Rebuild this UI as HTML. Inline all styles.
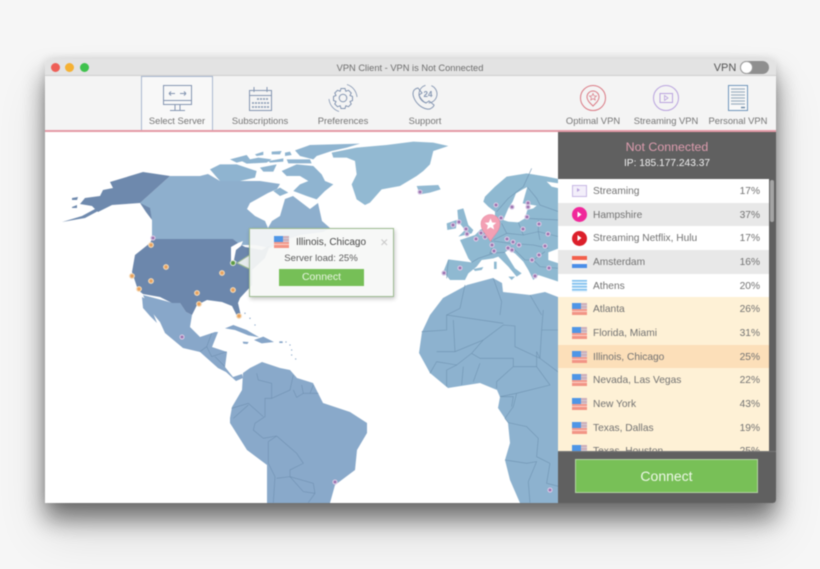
<!DOCTYPE html>
<html><head><meta charset="utf-8"><title>VPN Client</title>
<style>
html,body{margin:0;padding:0;background:#f6f6f6}
#p{position:relative;width:820px;height:569px;overflow:hidden;font-family:"Liberation Sans",sans-serif;filter:blur(.4px)}
#w{position:absolute;left:45px;top:59px;width:731px;height:444px;border-radius:5px 5px 3px 3px;box-shadow:0 16px 24px rgba(0,0,0,.5),0 30px 50px rgba(0,0,0,.12),0 0 10px rgba(0,0,0,.12)}
#t{position:absolute;left:45px;top:59px;width:731px;height:17px;background:#e3e3e3;border-radius:5px 5px 0 0;border-bottom:1px solid #cfcfcf;box-sizing:border-box}
.d{position:absolute;width:9px;height:9px;border-radius:50%;top:63px}
#b{position:absolute;left:45px;top:76px;width:731px;height:54px;background:#f4f4f4}
#l{position:absolute;left:45px;top:130px;width:731px;height:1.5px;background:#e49aa6}
#m{position:absolute;left:45px;top:131px;width:513px;height:372px;background:#fff}
svg{position:absolute;left:0;top:0}
.x{position:absolute;font-size:9.4px;color:#757575;line-height:12px;white-space:nowrap;text-align:center}
#s{position:absolute;left:558px;top:131px;width:218px;height:372px;background:#606060;border-radius:0 0 3px 0}
.r{position:absolute;left:558px;width:211px;height:23.7px;line-height:25.2px;font-size:10.2px;color:#727272;background:#fff}
.r span{position:absolute;left:35px}
.r b{position:absolute;right:9px;font-weight:normal}
.r i{position:absolute;left:14px;top:6px;width:15px;height:12px}
.o{background:#fef1d6}.g{background:#e8e8e8}
.us{background:linear-gradient(#f39a8c 0 2px,#fbd0c4 2px 3px,#f39a8c 3px 5px,#fbd0c4 5px 6px,#f39a8c 6px 8px,#fbd0c4 8px 9px,#f29485 9px 12px)}
.us:before{content:"";position:absolute;left:0;top:0;width:9px;height:6px;background:#4f96e6}
.us:after{content:"";position:absolute;left:9px;top:0;width:6px;height:6px;background:#a9c4e6;opacity:.5}
.nl{background:linear-gradient(#f2604c 0 4px,#fdf4f0 4px 8px,#4a8ee8 8px 12px)}
.gr{background:repeating-linear-gradient(#7fc0ef 0 1.5px,#e2f1fb 1.5px 3px)}
#cn{position:absolute;left:575px;top:459px;width:183px;height:34px;box-sizing:border-box;background:#78c057;border:1px solid #b3d4a3;color:#eef8e8;font-size:14px;line-height:33px;text-align:center}
#pop{position:absolute;left:249px;top:228px;width:145px;height:69px;box-sizing:border-box;background:rgba(246,248,246,.93);border:1px solid #9dbb90;box-shadow:1px 2px 4px rgba(0,0,0,.22)}
</style></head><body><div id="p">
<div id="w"></div>
<div id="m"></div>
<svg width="820" height="569" viewBox="0 0 820 569">
<defs><clipPath id="c"><rect x="45" y="131" width="513" height="372"/></clipPath></defs>
<g clip-path="url(#c)">
<!-- Canada -->
<polygon fill="#8eafcd" points="170,176 200,176 208,174 220,181 243,181 260,181 280,184 277,189 268,193 250,203 247,209 255,216 265,221 268,228 272,221 280,216 285,199 293,196 310,209 318,203 322,221 330,228 323,232 300,235 285,240 270,248 255,245 240,245 233,239 152,239 152,220 150,210 140,203"/>
<!-- Arctic + Greenland in crop coords -->
<g transform="translate(200 131) scale(.3333)" fill="#8fb4d0">
<polygon points="30,115 60,100 110,100 170,120 165,140 120,150 60,150"/>
<polygon points="90,85 140,72 150,85 110,95"/>
<polygon points="165,70 190,62 190,72 170,75"/>
<polygon points="215,62 245,60 240,70 215,70"/>
<polygon points="255,65 270,62 275,72 255,75"/>
<polygon points="125,90 175,80 215,85 200,95 140,98"/>
<polygon points="205,90 250,82 250,92 210,95"/>
<polygon points="260,85 330,85 335,97 265,97"/>
<polygon points="180,110 230,100 220,122 190,122"/>
<polygon points="245,120 290,100 340,105 365,130 375,150 400,160 375,180 350,205 320,195 280,180 300,160 325,150 300,135 260,135"/>
<polygon points="220,180 240,170 265,185 240,195"/>
<polygon points="285,58 330,42 480,38 440,50 395,60 350,75 340,85 300,75"/>
<polygon fill="#92b9d2" points="395,65 470,50 560,42 640,32 700,35 745,45 700,60 690,100 670,120 650,135 600,165 545,175 510,215 495,222 470,205 455,160 470,130 465,90 440,80 400,80"/>
<polygon fill="#92b9d2" points="650,165 715,162 722,175 690,185 660,190"/>
</g>
<!-- Alaska -->
<polygon fill="#6e89ad" points="170,176 143,172 110,182 113,188 103,190 100,196 85,198 80,204 92,206 98,212 112,205 140,203"/>
<polygon fill="#6e89ad" points="62,222 82,216 95,209 100,210 85,218"/>
<polygon fill="#6e89ad" points="140,203 150,208 152,220 146,212"/>
<polygon fill="#6e89ad" points="72,198 78,197 77,200 72,200"/><polygon fill="#6e89ad" points="72,207 77,205 77,208 72,208"/>
<!-- Mexico + central America -->
<polygon fill="#88a7c9" points="143,295 173,303 180,303 186,312 192,315 190,327 200,337 215,332 218,332 212,347 227,352 225,367 233,377 242,374 243,378 236,381 226,372 218,368 200,352 183,348 165,333 160,322 150,310"/>
<polygon fill="#88a7c9" points="142,297 148,300 157,323 150,316 143,308"/>
<!-- USA -->
<polygon fill="#6c87ac" points="152,239 233,239 238,243 245,247 262,250 270,245 265,258 252,270 252,285 240,298 238,303 241,316 238,318 232,306 222,302 207,300 197,305 192,315 186,312 180,303 172,303 160,297 143,294 138,290 132,272 135,255 150,243"/>
<polygon fill="#fff" points="231,247 238,243 243,241 241,246 236,250 234,260 237,262 231,263"/>
<!-- Caribbean -->
<g transform="translate(150 310) scale(.3333)" fill="#86a5c8">
<polygon points="225,55 250,45 290,60 328,82 295,76 255,60"/>
<polygon points="312,90 340,80 372,96 335,100"/>
<polygon points="278,95 296,96 292,102 280,101"/>
<polygon points="388,94 398,94 398,99 388,99"/>
<circle cx="408" cy="96" r="2"/><circle cx="420" cy="105" r="2"/><circle cx="425" cy="120" r="2"/><circle cx="425" cy="135" r="2"/><circle cx="437" cy="147" r="2"/><circle cx="285" cy="10" r="2"/><circle cx="300" cy="25" r="2"/><circle cx="315" cy="45" r="2"/>
</g>
<!-- South America -->
<polygon fill="#89a9ca" points="230,418 232,407 242,390 243,373 250,368 262,362 280,368 290,370 297,378 313,383 323,403 350,412 367,423 367,433 357,450 355,470 335,485 330,503 267,503 267,465 247,450 230,423"/>
<g transform="translate(150 310) scale(.3333)" fill="none" stroke="#6e8fb0" stroke-width="1.7">
<polyline points="320,190 325,210 365,220 365,265 345,265 345,320 315,340 310,360 340,385 380,378 355,395 355,460 375,500 370,578"/>
<polyline points="365,265 420,240 430,195"/><polyline points="430,240 440,262 460,250 455,225"/><polyline points="480,250 490,225"/><polyline points="460,250 505,250"/>
<polyline points="245,295 295,280 340,320"/><polyline points="250,325 295,285"/>
<polyline points="380,378 440,430 460,460 420,480 420,500 490,520 495,550 475,578"/>
<polyline points="380,505 420,500 460,545 495,550"/>
<polyline points="185,70 170,110 150,125"/><polyline points="170,110 185,140 230,125"/><polyline points="195,140 225,170"/>
</g>
<!-- Africa -->
<polygon fill="#8db2cf" points="430,315 443,298 467,285 493,278 502,283 503,292 530,295 545,292 558,297 558,503 520,503 510,480 505,460 510,443 508,423 498,408 500,397 497,390 480,383 448,388 430,373 419,353 422,332"/>
<g transform="translate(150 310) scale(.3333)" fill="none" stroke="#6e92b0" stroke-width="1.7">
<polyline points="815,65 890,60 890,15 1060,40"/><polyline points="910,30 915,125 1000,90 1060,45 1095,48 1095,110 1170,145 1175,60 1180,0"/>
<polyline points="860,125 915,125"/><polyline points="1000,90 965,130 920,165 860,155 840,190"/><polyline points="920,165 890,180 890,230"/>
<polyline points="940,170 935,225"/><polyline points="990,160 970,215"/><polyline points="965,130 990,145 1090,145 1090,170 1040,215 1040,235"/>
<polyline points="1090,170 1160,170 1200,225 1100,250 1050,260"/><polyline points="1160,170 1160,125 1170,145 1230,190"/>
<polyline points="1100,250 1090,290 1065,325 1075,338 1130,350 1165,385 1160,440 1200,460"/><polyline points="1065,450 1130,460 1160,455 1135,515 1140,578"/><polyline points="1200,460 1190,520 1230,530"/><polyline points="1175,60 1230,60"/>
<polyline points="1050,260 1090,260 1085,290"/>
</g>
<!-- Europe -->
<g transform="translate(440 165) scale(.3333)">
<polygon fill="#8fb9d1" points="10,320 25,283 95,292 85,280 60,225 105,210 120,195 165,170 165,140 145,125 130,110 135,95 165,65 200,35 260,25 320,35 356,42 356,350 295,330 280,345 265,315 250,290 225,265 205,255 195,262 225,310 245,325 230,335 205,305 175,275 160,280 125,285 110,305 85,325 75,345 30,345"/>
<polygon fill="#fff" points="190,165 205,130 218,110 228,85 250,72 262,66 255,90 248,115 290,122 280,130 262,135 255,160 235,172 205,170"/>
<polygon fill="#fff" points="325,262 356,250 356,295 325,285"/>
<polygon fill="#fff" points="320,50 356,55 356,70 335,65"/>
<polygon fill="#8fb9d1" points="52,135 70,130 85,180 100,195 95,205 55,215 75,195 55,170"/>
<polygon fill="#8fb9d1" points="20,175 50,165 48,190 22,195"/>
<polygon fill="#8fb9d1" points="100,312 130,306 125,315 105,318"/>
<polygon fill="#8fb9d1" points="162,290 170,290 170,312 162,312"/>
<polygon fill="#8fb9d1" points="205,335 225,335 215,345"/>
<g fill="none" stroke="#6e92b0" stroke-width="1.7">
<polyline points="25,285 20,340"/><polyline points="95,292 115,280 160,265"/>
<polyline points="120,195 150,215 160,240 150,265 195,262"/><polyline points="185,175 200,205 160,225"/><polyline points="200,205 250,210 295,200 300,225"/><polyline points="235,172 250,210"/>
<polyline points="160,228 210,235 280,240 325,250"/><polyline points="215,245 255,285 280,285 315,260"/><polyline points="280,285 300,305 356,310"/>
<polyline points="170,140 205,100 250,65 275,10"/><polyline points="262,66 290,100 300,120 356,140"/><polyline points="255,160 356,165"/><polyline points="295,200 295,165"/><polyline points="295,200 356,215"/>
</g></g>
<g transform="translate(400 135) scale(.3333)" fill="none" stroke="#6e92b0" stroke-width="1.7"><polyline points="195,450 180,520 140,540"/><polyline points="280,430 305,500 300,540"/><polyline points="390,480 425,540"/></g>
<!-- orange dots -->
<g fill="#e8a35f" stroke="#f4d9b7" stroke-width="1.2">
<circle cx="151" cy="245" r="2.3"/><circle cx="166" cy="267" r="2.3"/><circle cx="132" cy="276" r="2.3"/><circle cx="151" cy="281" r="2.3"/><circle cx="139" cy="289" r="2.3"/><circle cx="222" cy="273" r="2.3"/><circle cx="197" cy="293" r="2.3"/><circle cx="233" cy="290" r="2.3"/><circle cx="199" cy="304" r="2.3"/><circle cx="239" cy="316" r="2.3"/>
</g>
<!-- purple dots -->
<g fill="#9b70ad" stroke="#d5c6e2" stroke-width="1.2">
<circle cx="153" cy="238" r="2"/><circle cx="182" cy="337" r="2"/><circle cx="420" cy="192" r="2"/><circle cx="453" cy="225" r="2"/><circle cx="459" cy="222" r="2"/><circle cx="466" cy="229" r="2"/><circle cx="467" cy="234" r="2"/><circle cx="476" cy="239" r="2"/><circle cx="481" cy="233" r="2"/><circle cx="485" cy="237" r="2"/><circle cx="496" cy="205" r="2"/><circle cx="512" cy="207" r="2"/><circle cx="528" cy="203" r="2"/><circle cx="528" cy="207" r="2"/><circle cx="527" cy="217" r="2"/><circle cx="501" cy="218" r="2"/><circle cx="539" cy="224" r="2"/><circle cx="523" cy="229" r="2"/><circle cx="548" cy="234" r="2"/><circle cx="507" cy="239" r="2"/><circle cx="513" cy="242" r="2"/><circle cx="519" cy="245" r="2"/><circle cx="492" cy="245" r="2"/><circle cx="494" cy="251" r="2"/><circle cx="508" cy="248" r="2"/><circle cx="512" cy="250" r="2"/><circle cx="545" cy="246" r="2"/><circle cx="539" cy="255" r="2"/><circle cx="532" cy="260" r="2"/><circle cx="549" cy="268" r="2"/><circle cx="535" cy="276" r="2"/><circle cx="460" cy="268" r="2"/><circle cx="444" cy="273" r="2"/><circle cx="335" cy="482" r="2"/><circle cx="550" cy="490" r="2"/>
</g>
<!-- pin -->
<path d="M490.500 241.500 C487.500 235.500 481 231 481 224 A9.500 9.500 0 0 1 500 224 C500 231 493.500 235.500 490.500 241.500 Z" fill="#f3a0b4" stroke="#e58aa2" stroke-width=".6"/>
<polygon points="490.500,218.500 492.200,222.500 496.300,222.800 493.100,225.500 494.100,229.500 490.500,227.300 486.900,229.500 487.900,225.500 484.700,222.800 488.800,222.500" fill="#fff"/>
</g>
</svg>
<div id="s"></div>
<div id="t"></div>
<div class="d" style="left:51px;background:#ee5f57"></div><div class="d" style="left:65px;background:#f5b133"></div><div class="d" style="left:80px;background:#3fc24d"></div>
<div class="x" style="left:310px;width:200px;top:62px;font-size:9.3px;color:#6e6e6e">VPN Client - VPN is Not Connected</div>
<div class="x" style="left:712px;width:26px;top:62px;font-size:11px;color:#555">VPN</div>
<div style="position:absolute;left:740px;top:61px;width:29px;height:13px;border-radius:7px;background:#8f8f8f"></div>
<div style="position:absolute;left:740px;top:61px;width:13px;height:13px;border-radius:50%;background:#fff;border:.5px solid #999;box-sizing:border-box"></div>
<div id="b"></div>
<div style="position:absolute;left:141px;top:76px;width:72px;height:54px;box-sizing:border-box;border:1px solid #a9b8cf;border-bottom:none;background:#f8f8f8"></div>
<svg width="820" height="130" viewBox="0 0 820 130" fill="none">
<g stroke="#8596b2" stroke-width="1">
<rect x="163.500" y="85.500" width="28" height="19"/><line x1="163.500" y1="100.500" x2="191.500" y2="100.500"/><path d="M175 105V110M180 105V110M170 110.500H185"/>
<path d="M169 93.500H175M169 93.500L171 91.500M169 93.500L171 95.500M180 93.500H186M186 93.500L184 91.500M186 93.500L184 95.500"/>
<rect x="249.500" y="90.500" width="22" height="20"/><line x1="249.500" y1="95.500" x2="271.500" y2="95.500"/><path d="M254 87V92M267 87V92"/>
<path stroke-width="1.500" stroke-dasharray="2 1" d="M257 99H269M252 103H269M252 107H269"/>
<circle cx="343" cy="98" r="3.800"/>
<path d="M341 88.500H345L345.800 91.200L348.500 90.300L351.200 93L350 95.500L352.500 96.500V100.500L350 101.500L351.200 104L348.500 106.700L345.800 105.800L345 108.500H341L340.200 105.800L337.500 106.700L334.800 104L336 101.500L333.500 100.500V96.500L336 95.500L334.800 93L337.500 90.300L340.200 91.200Z"/>
<path d="M347 84.500A14.500 14.500 0 0 1 357 97M339 111.500A14.500 14.500 0 0 1 329 99" stroke-width=".8"/>
<path d="M418 88C413 89 412 93 414 98C416 103 421 108 427 109C431 110 434 106 434 105L429 101L426 103C423 102 420 98 419 95L422 93Z"/>
<circle cx="428" cy="94" r="9" stroke-width=".9" stroke-dasharray="24 6" transform="rotate(100 428 94)"/>
</g>
<text x="428" y="97" font-family="Liberation Sans" font-size="8" font-weight="bold" fill="#8596b2" text-anchor="middle">24</text>
<circle cx="593" cy="98" r="12.500" stroke="#da7a84" stroke-width="1"/>
<path d="M593 106C590 103 587 100.500 587 97A6 6 0 0 1 599 97C599 100.500 596 103 593 106Z" stroke="#da7a84" stroke-width="1"/>
<polygon points="593,93.500 594,95.800 596.500,96 594.600,97.600 595.200,100 593,98.700 590.800,100 591.400,97.600 589.500,96 592,95.800" stroke="#da7a84" stroke-width=".7"/>
<circle cx="666" cy="98" r="12.500" stroke="#b9a3de" stroke-width="1"/>
<rect x="660" y="93.500" width="12.500" height="9" stroke="#b9a3de" stroke-width="1"/><path d="M664.500 95.500L668 98L664.500 100.500Z" stroke="#b9a3de" stroke-width=".8"/>
<rect x="728.500" y="85.500" width="19" height="25" stroke="#6f95ba" stroke-width="1" fill="#f9f9f9"/>
<path d="M731 89H745M731 92H745M731 95H745M731 98H745M731 101H745M731 104H745" stroke="#9fb1c2" stroke-width="1.300"/>
<path d="M741 107.500H745" stroke="#6f8aa6" stroke-width="1.500"/>
</svg>
<div class="x" style="left:141px;width:72px;top:115px">Select Server</div>
<div class="x" style="left:220px;width:80px;top:115px">Subscriptions</div>
<div class="x" style="left:303px;width:80px;top:115px">Preferences</div>
<div class="x" style="left:385px;width:80px;top:115px">Support</div>
<div class="x" style="left:553px;width:80px;top:115px">Optimal VPN</div>
<div class="x" style="left:626px;width:80px;top:115px">Streaming VPN</div>
<div class="x" style="left:698px;width:80px;top:115px">Personal VPN</div>
<div id="l"></div>
<div class="x" style="left:558px;width:218px;top:140px;font-size:12.400px;line-height:14px;color:#dd9cae">Not Connected</div>
<div class="x" style="left:558px;width:218px;top:158px;font-size:10.200px;color:#f2f2f2">IP: 185.177.243.37</div>

<div class="r" style="top:179px"><i style="background:#f3effa;box-sizing:border-box;border:1px solid #c7b7e4"></i><span>Streaming</span><b>17%</b></div>
<div class="r g" style="top:202.700px"><i style="background:#f0289a;border-radius:50%;width:15px;height:15px;top:4.500px"></i><span>Hampshire</span><b>37%</b></div>
<div class="r" style="top:226.400px"><i style="background:#dc1f2a;border-radius:50%;width:15px;height:15px;top:4.500px"></i><span>Streaming Netflix, Hulu</span><b>17%</b></div>
<div class="r g" style="top:250px"><i class="nl"></i><span>Amsterdam</span><b>16%</b></div>
<div class="r" style="top:273.700px"><i class="gr"></i><span>Athens</span><b>20%</b></div>
<div class="r o" style="top:297.400px"><i class="us"></i><span>Atlanta</span><b>26%</b></div>
<div class="r o" style="top:321px"><i class="us"></i><span>Florida, Miami</span><b>31%</b></div>
<div class="r o" style="top:344.700px;background:#fcdfb9"><i class="us"></i><span>Illinois, Chicago</span><b>25%</b></div>
<div class="r o" style="top:368.400px"><i class="us"></i><span>Nevada, Las Vegas</span><b>22%</b></div>
<div class="r o" style="top:392px"><i class="us"></i><span>New York</span><b>43%</b></div>
<div class="r o" style="top:415.700px"><i class="us"></i><span>Texas, Dallas</span><b>19%</b></div>
<div style="position:absolute;left:558px;top:439.400px;width:211px;height:12px;overflow:hidden"><div class="r o" style="left:0;top:0"><i class="us"></i><span>Texas, Houston</span><b>25%</b></div></div>
<div style="position:absolute;left:558px;top:451px;width:218px;height:1px;background:#777"></div>
<div style="position:absolute;left:770px;top:180px;width:4px;height:42px;border-radius:2px;background:#a4a4a4"></div>
<svg width="820" height="300" viewBox="0 0 820 300">
<polygon points="577,188 580,190 577,192" fill="#b9a3de"/>
<polygon points="577.500,211.500 581.500,214.500 577.500,217.500" fill="#fff"/><polygon points="577.500,235 581.500,238 577.500,241" fill="#fff"/>
</svg>
<div id="cn">Connect</div>
<svg width="820" height="300" viewBox="0 0 820 300"><polygon points="250,255 237,263 250,269" fill="#f4f6f4" fill-opacity=".9"/><polyline points="249.500,255 237,263 249.500,269" fill="none" stroke="#9dbb90"/></svg>
<div id="pop"></div>
<svg width="820" height="300" viewBox="0 0 820 300"><circle cx="233" cy="263" r="2.500" fill="#5d9a44" stroke="#dfe9d9"/><path d="M381.500 239.500L387 245M387 239.500L381.500 245" stroke="#c8c8c8" stroke-width="1"/></svg>
<i class="us" style="position:absolute;left:274px;top:236px;width:15px;height:12px"></i>
<div class="x" style="left:281px;width:100px;top:236.500px;font-size:10px;color:#484848">Illinois, Chicago</div>
<div class="x" style="left:261px;width:120px;top:252.500px;font-size:9.600px;color:#5c5c5c">Server load: 25%</div>
<div class="x" style="left:279px;top:269px;width:85px;height:17px;line-height:17.500px;background:#76bf57;color:#eaf6e3;font-size:10.500px">Connect</div>
</div></body></html>
